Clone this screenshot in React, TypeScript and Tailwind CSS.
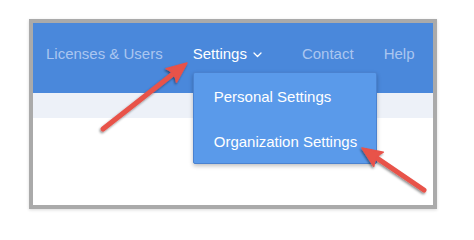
import React from "react";

const font = { fontFamily: '"Liberation Sans", Arial, sans-serif' };

function Arrow({ x1, y1, x2, y2 }: { x1: number; y1: number; x2: number; y2: number }) {
  const dx = x2 - x1;
  const dy = y2 - y1;
  const len = Math.hypot(dx, dy);
  const ux = dx / len;
  const uy = dy / len;
  const head = 20;
  const half = 8.5;
  const bx = x2 - ux * head;
  const by = y2 - uy * head;
  const lx = bx - uy * half;
  const ly = by + ux * half;
  const rx = bx + uy * half;
  const ry = by - ux * half;
  const nx = x2 - ux * (head - 5);
  const ny = y2 - uy * (head - 5);
  return (
    <g filter="url(#arrowShadow)">
      <line x1={x1} y1={y1} x2={nx} y2={ny} stroke="#e8524a" strokeWidth={5} strokeLinecap="round" />
      <path d={`M${x2} ${y2} L${lx} ${ly} Q${nx} ${ny} ${rx} ${ry} Z`} fill="#e8524a" stroke="#e8524a" strokeWidth={1.5} strokeLinejoin="round" />
    </g>
  );
}

export default function App() {
  return (
    <div className="relative h-[228px] w-[474px] overflow-hidden bg-white" style={font}>
      <div className="ml-[29px] pt-[19px]">
        <div className="flex h-[190px] w-[408px] flex-col border-4 border-[#aaaaaa] bg-white shadow-[0_1px_3px_rgba(0,0,0,0.15)]">
          <nav className="flex h-[70px] items-start bg-[#4a88db] pl-[13px] pt-[22px] text-[15px] leading-[18px]">
            <span className="text-[#aac6f0]">Licenses &amp; Users</span>
            <div className="relative ml-[30px] flex items-center text-white">
              <span>Settings</span>
              <svg className="ml-[6px] mt-[1px]" width="9" height="6" viewBox="0 0 9 6" fill="none">
                <path d="M1 1l3.5 3.5L8 1" stroke="#ffffff" strokeWidth="1.3" strokeLinecap="round" strokeLinejoin="round" />
              </svg>
              <div className="absolute left-0 top-[27px] z-10 flex w-[184px] flex-col rounded-[2px] border border-[#4a82d0] bg-[#5a9aea] shadow-[0_2px_4px_rgba(0,0,0,0.25)]">
                <div className="h-[45px] whitespace-nowrap pl-[20px] pt-[15px] text-white">Personal Settings</div>
                <div className="h-[45px] whitespace-nowrap pl-[20px] pt-[15px] text-white">Organization Settings</div>
              </div>
            </div>
            <span className="ml-[40px] text-[#aac6f0]">Contact</span>
            <span className="ml-[30px] text-[#aac6f0]">Help</span>
          </nav>
          <div className="h-[25px] bg-[#edf1f8]" />
          <div className="flex-1 bg-white" />
        </div>
      </div>
      <svg className="pointer-events-none absolute left-0 top-0 z-20" width="474" height="228" viewBox="0 0 474 228">
        <defs>
          <filter id="arrowShadow" x="-20%" y="-20%" width="140%" height="140%">
            <feDropShadow dx="-1" dy="1.5" stdDeviation="1" floodColor="#000000" floodOpacity="0.45" />
          </filter>
        </defs>
        <Arrow x1={103} y1={129} x2={187} y2={63} />
        <Arrow x1={424} y1={190} x2={362} y2={148} />
      </svg>
    </div>
  );
}
